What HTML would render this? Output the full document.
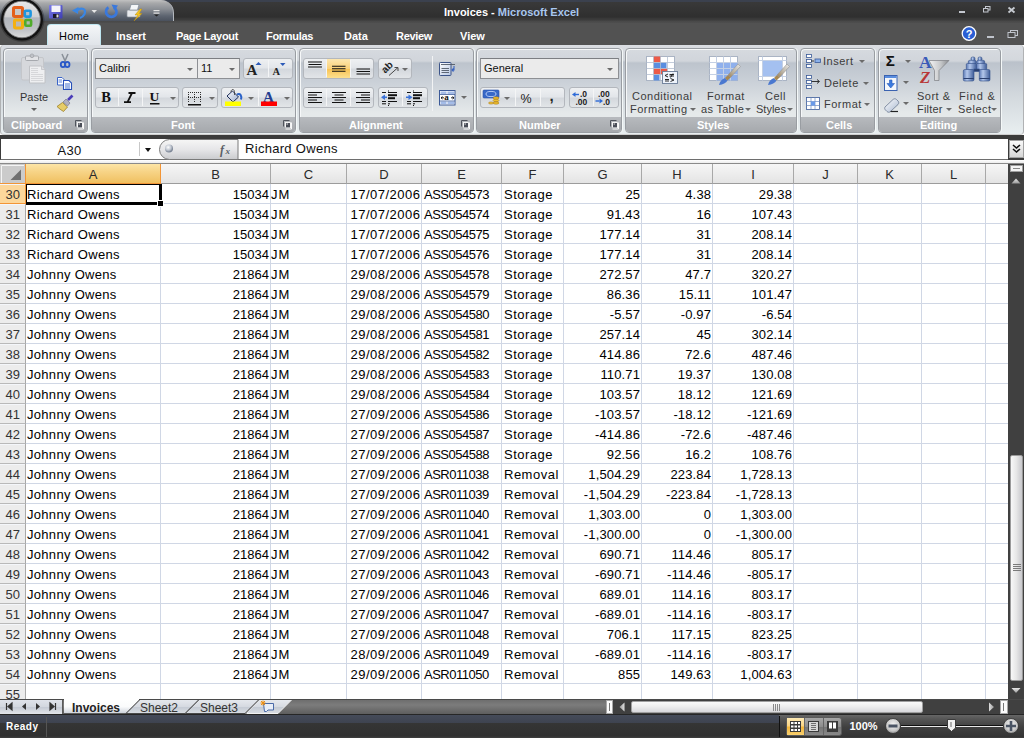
<!DOCTYPE html>
<html><head><meta charset="utf-8">
<style>
*{margin:0;padding:0;box-sizing:border-box}
html,body{width:1024px;height:738px;overflow:hidden;background:#fff;font-family:"Liberation Sans",sans-serif}
.a{position:absolute}
/* title bar */
#title{left:0;top:0;width:1024px;height:23px;background:linear-gradient(#3b414e 0,#3b414e 2px,#393939 2px,#2f2f2f 17px,#3b3b3b 19px,#3b3b3b 20px,#484848 21px,#4e4e4e 23px)}
#qat{left:0;top:0;width:174px;height:21px;border-radius:0 13px 0 0;background:linear-gradient(#c2c2c2 0,#a8a9ab 3px,#8b8f95 9px,#5d6470 16px,#4a515d 21px);border-right:1px solid #b4b8be}
#ttl{left:444px;top:6px;font-size:11px;font-weight:bold;color:#fff;white-space:nowrap}
#ttl span{color:#a9c7ef}
/* tabs */
#tabs{left:0;top:23px;width:1024px;height:22px;background:#525252}
.tab{position:absolute;top:30px;font-size:11px;color:#fff;white-space:nowrap}
#hometab{left:47px;top:24px;width:54px;height:22px;border-radius:4px 4px 0 0;background:linear-gradient(#f4f6f8,#dfe3e8);border:1px solid #bfe6f0;border-bottom:none}
/* ribbon */
#ribbon{left:0;top:45px;width:1024px;height:90px;background:linear-gradient(#dadde2 0,#d4d8dd 15px,#bac1ca 17px,#d2d8dd 50px,#e8eef0 88px);border-radius:4px 4px 4px 4px;border-left:1px solid #b0b2b4;border-right:1px solid #b0b2b4;border-bottom:1px solid #cfcfcf}
.grp{position:absolute;top:48px;height:85px;border:1px solid #999da2;border-radius:4px;box-shadow:inset 1px 1px 0 #f6f8f9,1px 0 0 #f4f8f8;background:linear-gradient(#d6dadf 0,#d1d5db 12px,#bdc4cd 14px,#ccd2d9 35px,#e5e9ea 64px);overflow:hidden}
.glab{position:absolute;left:0;right:0;bottom:0;height:15px;background:linear-gradient(#b7babe,#a6a9ad);color:#fff;font-size:11px;font-weight:bold;text-align:left;line-height:17px;white-space:nowrap}

.combo{position:absolute;height:21px;background:#ebebeb;border:1px solid #8e9094;border-top-color:#7c7e82;font-size:11px;color:#111;padding-left:3px;line-height:19px;white-space:nowrap}
.dd{position:absolute;width:0;height:0;border-left:3px solid transparent;border-right:3px solid transparent;border-top:3px solid #6b6b6b}
.bstrip{position:absolute;height:21px;border:1px solid #b3b7bd;border-radius:3px;background:linear-gradient(#eef0f2 0,#e3e6ea 45%,#d4d8dd 55%,#e2e5e8 100%)}
.bsep{position:absolute;top:1px;bottom:1px;width:1px;background:#c9ccd1;border-right:1px solid #f4f5f6}
.rt{position:absolute;font-size:11px;color:#3b3b3b;white-space:nowrap;line-height:12px;letter-spacing:0.5px}
.dl{position:absolute;width:7px;height:7px;border:1px solid #6a6d72;border-radius:1px}
/* formula bar */
#fbar{left:0;top:135px;width:1024px;height:29px;background:#3b3b3b}
#fwhite{left:0;top:139px;width:1008px;height:21px;background:#fff;border-bottom:1px solid #6e6e6e;border-left:1px solid #3b3b3b}
#fstrip{left:0;top:160px;width:1024px;height:4px;background:linear-gradient(#ffffff,#ececec);border-bottom:1px solid #8a8a8a}
/* grid */
.ch{position:absolute;top:164px;height:20px;background:linear-gradient(#f6f6f6,#e4e4e4);border-right:1px solid #a8a8a8;border-bottom:1px solid #9c9c9c;font-size:13px;color:#2a2a2a;text-align:center;line-height:21px}
.ch.sel{background:linear-gradient(#fde5a6,#f7d487 40%,#f0c060);border-right-color:#f29536;border-bottom-color:#f29536}
.vl{position:absolute;top:184px;width:1px;height:515px;background:#d0d7e5}
.hl{position:absolute;left:26px;width:982px;height:1px;background:#d0d7e5}
.rh{position:absolute;left:0;width:26px;height:20px;background:#ececec;border-right:1px solid #a8a8a8;border-bottom:1px solid #b9b9b9;box-shadow:inset 0 1px 0 #f4f6fa;font-size:13px;color:#333;text-align:right;padding-right:5px;line-height:22px}
.rh.sel{background:#fcd79b;border-right-color:#f29536;border-bottom-color:#f29536}
.c{position:absolute;height:20px;font-size:13px;color:#000;white-space:nowrap;line-height:21px}
.c.r{text-align:right}
#corner{left:0;top:164px;width:26px;height:20px;background:#cbcbcb;border-right:1px solid #f29536;border-bottom:1px solid #f29536}
#selbox{left:25px;top:183px;width:137px;height:22px;border:2px solid #000}
#fillh{left:158px;top:201px;width:5px;height:5px;background:#000;border:1px solid #fff}
/* scrollbars */
#vscroll{left:1008px;top:164px;width:16px;height:535px;background:#404040}
#vthumb{left:1010px;top:455px;width:13px;height:226px;border-radius:2px;background:linear-gradient(90deg,#f8f8f8,#e6e6e6 50%,#c8c8cc);border:1px solid #9a9a9a}
#tabbar{left:0;top:699px;width:1024px;height:15px;background:linear-gradient(#4a4a4a 0,#4a4a4a 1px,#6e6e6e 1px,#7c7c7c 6px,#5e5e5e 15px)}
#status{left:0;top:714px;width:1024px;height:24px;background:linear-gradient(#262626 0,#262626 1px,#454b59 1px,#3e4350 9px,#353535 9px,#303030 22px,#404040 24px)}
</style></head><body>
<div id="title" class="a"></div>
<div id="qat" class="a"></div>
<svg class="a" style="left:0;top:0;z-index:5" width="48" height="44" viewBox="0 0 48 44">
 <defs>
  <radialGradient id="obg" cx="50%" cy="30%" r="70%"><stop offset="0" stop-color="#f0f0f0"/><stop offset="0.5" stop-color="#c9cbce"/><stop offset="1" stop-color="#9ea2a8"/></radialGradient>
  <linearGradient id="obg2" x1="0" y1="0" x2="0" y2="1"><stop offset="0" stop-color="#e8e8e8"/><stop offset="0.42" stop-color="#d0d0d2"/><stop offset="0.46" stop-color="#b2b6bc"/><stop offset="0.75" stop-color="#bdc0c5"/><stop offset="1" stop-color="#dcdcdc"/></linearGradient>
 </defs>
 <circle cx="22" cy="19.5" r="22.5" fill="rgba(0,0,0,0.25)"/>
 <circle cx="22" cy="19.5" r="21" fill="#121212"/>
 <circle cx="22" cy="19.5" r="18.3" fill="url(#obg2)" stroke="#7a7a7a" stroke-width="0.8"/>
 <rect x="13.5" y="7.5" width="9" height="9" rx="1.2" fill="#c8c8c8" stroke="#e4601a" stroke-width="3"/>
 <rect x="24.8" y="10.8" width="5.8" height="5.8" rx="1" fill="#b8c0c8" stroke="#1e96e0" stroke-width="2.6"/>
 <rect x="14.5" y="20" width="8" height="8" rx="1.2" fill="#b8b8b8" stroke="#f4b010" stroke-width="3"/>
 <rect x="25.3" y="20" width="5.8" height="5.8" rx="1" fill="#b0b8b0" stroke="#50ac2c" stroke-width="2.6"/>
</svg>
<svg class="a" style="left:44px;top:0" width="125" height="22" viewBox="0 0 125 22">
 <defs><linearGradient id="sv" x1="0" y1="0" x2="1" y2="1"><stop offset="0" stop-color="#7b7de8"/><stop offset="1" stop-color="#3c3cb4"/></linearGradient></defs>
 <rect x="5" y="5" width="13.5" height="13.5" rx="1" fill="url(#sv)"/>
 <rect x="7.5" y="5.5" width="9" height="6.5" fill="#f4f4f8"/>
 <rect x="9" y="14" width="6" height="4" fill="#1a1a2a"/><rect x="12.5" y="14.5" width="2" height="3" fill="#ddd"/>
 <path d="M28 10.5 L34.5 7 L34 14 Z" fill="#3a86e4"/>
 <path d="M32.5 10.5 C38 7 42.5 9 40.5 14 C39.5 16 37.5 17.5 36 18" fill="none" stroke="#3a86e4" stroke-width="2.2"/>
 <path d="M47.5 10 L53 10 L50.2 13 Z" fill="#e8e8e8"/>
 <path d="M64.5 7.5 C61.5 9 61 14 64.5 16 C68 18 72.5 16 72.5 12 C72.5 10 71.5 8.5 70 7.5" fill="none" stroke="#3a78dc" stroke-width="2.6"/>
 <path d="M67.5 4.5 L74 5.5 L70.5 10.5 Z" fill="#3a78dc"/>
 <rect x="83" y="10" width="13" height="7" rx="1" fill="#e8eaee" stroke="#8a9098" stroke-width="0.7"/>
 <path d="M85.5 10 L87 4.5 L95 4.5 L93.5 10 Z" fill="#f4f6f8" stroke="#7e8894" stroke-width="0.7"/>
 <path d="M96 9 L91 15 L94 15 L90 21 L98 13.5 L95 13.5 L98 9 Z" fill="#f5c521" stroke="#b88a10" stroke-width="0.5"/>
 <rect x="109.5" y="10" width="6" height="1.2" fill="#e4e4e4"/><rect x="109.5" y="12.5" width="6" height="1.2" fill="#e4e4e4"/>
 <path d="M110 14.5 L115 14.5 L112.5 16.5 Z" fill="#222"/>
</svg>
<svg class="a" style="left:950px;top:0;z-index:5" width="74" height="44" viewBox="0 0 74 44">
 <rect x="9" y="11" width="6" height="2" fill="#c4c8d0"/>
 <rect x="35.5" y="6.5" width="4.5" height="3.5" fill="none" stroke="#c4c8d0" stroke-width="1"/>
 <rect x="33.5" y="8.5" width="4.5" height="3.5" fill="#373737" stroke="#c4c8d0" stroke-width="1"/>
 <path d="M58.5 7.5 L64.5 12.5 M64.5 7.5 L58.5 12.5" stroke="#c8ccd2" stroke-width="1.8"/>
 <circle cx="19" cy="33.5" r="6.8" fill="#2a5fd4" stroke="#ffffff" stroke-width="1.3"/>
 <text x="19" y="37.5" font-family="Liberation Sans" font-weight="bold" font-size="11" fill="#fff" text-anchor="middle">?</text>
 <rect x="37" y="36" width="7" height="2" fill="#c0c4cc"/>
 <rect x="60.5" y="30.5" width="7" height="5" fill="none" stroke="#c0c4cc" stroke-width="1"/>
 <rect x="58" y="32.5" width="7" height="5" fill="#4b4b4b" stroke="#c0c4cc" stroke-width="1"/>
</svg>
<div id="ttl" class="a">Invoices - <span>Microsoft Excel</span></div>
<div id="tabs" class="a"></div>
<div id="hometab" class="a"></div>
<div class="tab" style="left:59px;color:#000;letter-spacing:0.2px">Home</div>
<div class="tab" style="left:116px;font-weight:bold">Insert</div>
<div class="tab" style="left:176px;font-weight:bold;letter-spacing:-0.3px">Page Layout</div>
<div class="tab" style="left:266px;font-weight:bold;letter-spacing:-0.3px">Formulas</div>
<div class="tab" style="left:344px;font-weight:bold">Data</div>
<div class="tab" style="left:396px;font-weight:bold;letter-spacing:-0.3px">Review</div>
<div class="tab" style="left:460px;font-weight:bold">View</div>

<div id="ribbon" class="a"></div>
<div class="grp" style="left:3px;width:85px"><div class="glab" style="padding-left:7px">Clipboard</div></div>
<div class="grp" style="left:91px;width:205px"><div class="glab" style="padding-left:79px">Font</div></div>
<div class="grp" style="left:299px;width:175px"><div class="glab" style="padding-left:49px">Alignment</div></div>
<div class="grp" style="left:476px;width:146px"><div class="glab" style="padding-left:42px">Number</div></div>
<div class="grp" style="left:625px;width:172px"><div class="glab" style="padding-left:71px">Styles</div></div>
<div class="grp" style="left:800px;width:75px"><div class="glab" style="padding-left:25px">Cells</div></div>
<div class="grp" style="left:878px;width:123px"><div class="glab" style="padding-left:41px">Editing</div></div>


<!-- Clipboard -->
<svg class="a" style="left:18px;top:53px" width="30" height="32" viewBox="0 0 30 32">
 <rect x="3.5" y="4.5" width="22" height="22.5" rx="1.5" fill="#d6d8dc" stroke="#c4c6ca" stroke-width="1"/>
 <rect x="7.5" y="3" width="13" height="4.5" rx="1" fill="#e2e3e6" stroke="#a6a9ae" stroke-width="1"/>
 <circle cx="14" cy="2.8" r="1.8" fill="none" stroke="#a6a9ae" stroke-width="1"/>
 <path d="M11.5 13 H23.5 L27 16.5 V30 H11.5 Z" fill="#eeeff1" stroke="#c0c2c6" stroke-width="1"/>
 <path d="M23.5 13 V16.5 H27" fill="#dcdde0" stroke="#c0c2c6" stroke-width="0.8"/>
 <path d="M13 15.5 H20 M13 17.5 H20 M13 19.5 H20 M13 21.5 H25 M13 23.5 H25 M13 25.5 H25 M13 27.5 H25" stroke="#cfd1d4" stroke-width="0.8"/>
</svg>
<div class="rt" style="left:20px;top:91px;color:#333;letter-spacing:0">Paste</div>
<div class="dd" style="left:31px;top:108px;border-top-color:#606060"></div>
<svg class="a" style="left:55px;top:52px" width="20" height="62" viewBox="0 0 20 62">
 <path d="M7 2 L10.5 10 M13 2 L9.5 10" stroke="#8a9098" stroke-width="1.5"/>
 <ellipse cx="8" cy="12.5" rx="2.2" ry="2.6" fill="none" stroke="#2a58c8" stroke-width="1.8"/>
 <ellipse cx="12.3" cy="12.5" rx="2.2" ry="2.6" fill="none" stroke="#2a58c8" stroke-width="1.8"/>
 <path d="M2.5 25.5 H7 L9 27.5 V33 H2.5 Z" fill="#ffffff" stroke="#3a64c8" stroke-width="1"/>
 <path d="M3.5 28 H7 M3.5 30 H7" stroke="#4a74d0" stroke-width="0.9"/>
 <path d="M8.5 28.5 H14 L16.5 31 V37.5 H8.5 Z" fill="#ffffff" stroke="#2850b8" stroke-width="1.1"/>
 <path d="M10 32 H15 M10 34 H15 M10 36 H15" stroke="#3060c8" stroke-width="0.9"/>
 <path d="M2 54.5 L7.5 50.5 L12.5 55 L8.5 59.5 C6 58 4 56.5 2 54.5 Z" fill="#e6cc68" stroke="#9c8028" stroke-width="0.8"/>
 <path d="M8 50 L11 47 L15 51 L12.5 54 Z" fill="#b0b0c0" stroke="#6a6c80" stroke-width="0.6"/>
 <path d="M13 48 L17.5 43.5" stroke="#4a3cb8" stroke-width="2.6"/>
</svg>
<svg class="a" style="left:75px;top:120px" width="10" height="10" viewBox="0 0 10 10"><path d="M0.5 6.5 V0.5 H6.5" stroke="#50545c" stroke-width="1" fill="none"/><path d="M2 2.5 H7.5 V8 M2.5 2 V7.5" stroke="#f4f4f4" stroke-width="1" fill="none"/><rect x="3" y="3" width="4" height="4" fill="#4a4e58"/><rect x="3.5" y="3.5" width="1.5" height="1" fill="#ddd"/><path d="M2.5 9 H8.5 V2.5" stroke="#f8f8f8" stroke-width="1" fill="none"/></svg>
<!-- Font -->
<div class="combo" style="left:95px;top:58px;width:103px">Calibri</div>
<div class="dd" style="left:187px;top:68px"></div>
<div class="combo" style="left:197px;top:58px;width:43px">11</div>
<div class="dd" style="left:229px;top:68px"></div>
<div class="bstrip" style="left:243px;top:58px;width:50px"><div class="bsep" style="left:24px"></div></div>
<svg class="a" style="left:243px;top:58px" width="50" height="22" viewBox="0 0 50 22">
 <text x="3.5" y="17" font-family="Liberation Serif" font-weight="bold" font-size="15" fill="#222">A</text>
 <path d="M12.5 7 L15.5 4 L18.5 7 Z" fill="#2d5bb8"/>
 <text x="29.5" y="17" font-family="Liberation Serif" font-weight="bold" font-size="10.5" fill="#222">A</text>
 <path d="M37 5 L42.5 5 L39.75 8 Z" fill="#2d5bb8"/>
</svg>
<div class="bstrip" style="left:95px;top:87px;width:84px"><div class="bsep" style="left:22px"></div><div class="bsep" style="left:46px"></div></div>
<svg class="a" style="left:95px;top:87px" width="84" height="22" viewBox="0 0 84 22">
 <text x="6.3" y="15" font-family="Liberation Serif" font-weight="bold" font-size="14.5" fill="#111">B</text>
 <path d="M33.5 6 H40.5 M29 15.2 H36 M37 6 L32.5 15.2" stroke="#111" stroke-width="1.8" fill="none"/>
 <text x="54.5" y="14.2" font-family="Liberation Serif" font-weight="bold" font-size="13.5" fill="#111">U</text>
 <rect x="55" y="16" width="9.5" height="1.5" fill="#111"/>
 <path d="M75 10 L81 10 L78 13 Z" fill="#6b6b6b"/>
</svg>
<div class="bstrip" style="left:182px;top:87px;width:36px"></div>
<svg class="a" style="left:182px;top:87px" width="36" height="22" viewBox="0 0 36 22">
 <g fill="#303030">
  <rect x="6" y="5" width="1" height="1"/><rect x="8" y="5" width="1" height="1"/><rect x="10" y="5" width="1" height="1"/><rect x="12" y="5" width="1" height="1"/><rect x="14" y="5" width="1" height="1"/><rect x="16" y="5" width="1" height="1"/><rect x="18" y="5" width="1" height="1"/>
  <rect x="6" y="10" width="1" height="1"/><rect x="8" y="10" width="1" height="1"/><rect x="10" y="10" width="1" height="1"/><rect x="12" y="10" width="1" height="1"/><rect x="14" y="10" width="1" height="1"/><rect x="16" y="10" width="1" height="1"/><rect x="18" y="10" width="1" height="1"/>
  <rect x="6" y="7" width="1" height="1"/><rect x="6" y="9" width="1" height="1"/><rect x="6" y="12" width="1" height="1"/><rect x="6" y="14" width="1" height="1"/>
  <rect x="12" y="7" width="1" height="1"/><rect x="12" y="9" width="1" height="1"/><rect x="12" y="12" width="1" height="1"/><rect x="12" y="14" width="1" height="1"/>
  <rect x="18" y="7" width="1" height="1"/><rect x="18" y="9" width="1" height="1"/><rect x="18" y="12" width="1" height="1"/><rect x="18" y="14" width="1" height="1"/>
 </g>
 <rect x="6" y="17" width="13" height="1.5" fill="#111"/>
 <path d="M27 10 L33 10 L30 13 Z" fill="#6b6b6b"/>
</svg>
<div class="bstrip" style="left:221px;top:87px;width:72px"><div class="bsep" style="left:36px"></div></div>
<svg class="a" style="left:221px;top:87px" width="72" height="22" viewBox="0 0 72 22">
 <defs><linearGradient id="bk" x1="0" y1="0" x2="1" y2="1"><stop offset="0" stop-color="#ffffff"/><stop offset="1" stop-color="#9aaccc"/></linearGradient></defs>
 <path d="M6 9 L11.5 4 L17.5 10 L12 15 Z" fill="url(#bk)" stroke="#1c2c58" stroke-width="1"/>
 <path d="M10 5 C10 2 13 1.5 13.5 4.5 L13.5 8" fill="none" stroke="#333" stroke-width="0.8"/>
 <path d="M16 7.5 C19.5 6 21 9 20 12.5" fill="none" stroke="#2a62c8" stroke-width="2"/>
 <rect x="4" y="14.5" width="16" height="4.5" fill="#ffff00"/>
 <path d="M27 10 L33 10 L30 13 Z" fill="#6b6b6b"/>
 <text x="42" y="14.5" font-family="Liberation Serif" font-weight="bold" font-size="15" fill="#233e90">A</text>
 <rect x="40" y="14.5" width="16" height="4.5" fill="#ff0000"/>
 <path d="M63 10 L69 10 L66 13 Z" fill="#6b6b6b"/>
</svg>
<svg class="a" style="left:283px;top:120px" width="10" height="10" viewBox="0 0 10 10"><path d="M0.5 6.5 V0.5 H6.5" stroke="#50545c" stroke-width="1" fill="none"/><path d="M2 2.5 H7.5 V8 M2.5 2 V7.5" stroke="#f4f4f4" stroke-width="1" fill="none"/><rect x="3" y="3" width="4" height="4" fill="#4a4e58"/><rect x="3.5" y="3.5" width="1.5" height="1" fill="#ddd"/><path d="M2.5 9 H8.5 V2.5" stroke="#f8f8f8" stroke-width="1" fill="none"/></svg>
<!-- Alignment -->
<div class="bstrip" style="left:303px;top:58px;width:71px"><div class="bsep" style="left:22px"></div><div class="bsep" style="left:46px"></div></div>
<div class="a" style="left:327px;top:59px;width:23px;height:19px;background:linear-gradient(#fde7b0,#fbd27a 50%,#f9c252 52%,#fde08f)"></div>
<svg class="a" style="left:303px;top:58px" width="71" height="22" viewBox="0 0 71 22">
 <path d="M5 4 H19 M5.5 6.5 H18.5 M5 9 H19" stroke="#111" stroke-width="1.1"/>
 <path d="M29 8.3 H42.5 M29 10.8 H42.5 M29 13.3 H42.5" stroke="#111" stroke-width="1.1"/>
 <path d="M53.5 11 H67 M53.5 13.5 H67 M53.5 16 H67" stroke="#111" stroke-width="1.1"/>
</svg>
<div class="bstrip" style="left:378px;top:58px;width:34px"></div>
<svg class="a" style="left:378px;top:58px" width="34" height="22" viewBox="0 0 34 22">
 <text x="3" y="12.5" font-family="Liberation Sans" font-weight="bold" font-size="10" fill="#222" transform="rotate(-45 9 9)">ab</text>
 <path d="M11 17.5 L20 9.5 M16.5 9.5 H20 V13" stroke="#4a4a4a" stroke-width="1" fill="none"/>
 <path d="M24 10 L30 10 L27 13 Z" fill="#6b6b6b"/>
</svg>
<div class="bstrip" style="left:303px;top:87px;width:71px"><div class="bsep" style="left:22px"></div><div class="bsep" style="left:46px"></div></div>
<svg class="a" style="left:303px;top:87px" width="71" height="22" viewBox="0 0 71 22">
 <path d="M5 5.5 H19 M5 8 H14 M5 10.5 H19 M5 13 H14 M5 15.5 H19" stroke="#111" stroke-width="1.2"/>
 <path d="M29 5.5 H43 M31.5 8 H40.5 M29 10.5 H43 M31.5 13 H40.5 M29 15.5 H43" stroke="#111" stroke-width="1.2"/>
 <path d="M53 5.5 H67 M58 8 H67 M53 10.5 H67 M58 13 H67 M53 15.5 H67" stroke="#111" stroke-width="1.2"/>
</svg>
<div class="bstrip" style="left:378px;top:87px;width:50px"><div class="bsep" style="left:23px"></div></div>
<svg class="a" style="left:378px;top:87px" width="50" height="22" viewBox="0 0 50 22">
 <path d="M10.5 3.5 V4.5 M10.5 18 V19" stroke="#111" stroke-width="1"/><path d="M4 5.5 H8 M10 5.5 H19 M4 14.5 H8 M10 14.5 H19 M4 16.8 H8 M10 16.8 H12" stroke="#111" stroke-width="1"/><rect x="10" y="7.2" width="9" height="2" fill="#111"/><rect x="10" y="10.2" width="7" height="2" fill="#111"/><path d="M3 10.2 L7 7.5 V13 Z" fill="#3a72d8"/><rect x="6" y="9.5" width="3" height="1.5" fill="#3a72d8"/>
 <path d="M35.5 3.5 V4.5 M35.5 18 V19" stroke="#111" stroke-width="1"/><path d="M29 5.5 H33 M35 5.5 H44 M29 14.5 H33 M35 14.5 H44 M29 16.8 H33 M35 16.8 H37" stroke="#111" stroke-width="1"/><rect x="35" y="7.2" width="9" height="2" fill="#111"/><rect x="35" y="10.2" width="7" height="2" fill="#111"/><path d="M34.5 10.2 L30.5 7.5 V13 Z" fill="#3a72d8"/><rect x="28" y="9.5" width="3" height="1.5" fill="#3a72d8"/>
</svg>
<div class="a" style="left:432px;top:56px;width:1px;height:55px;background:#b0b4ba;border-right:1px solid #f2f3f4"></div>
<svg class="a" style="left:436px;top:58px" width="36" height="52" viewBox="0 0 36 52">
 <defs><linearGradient id="wp" x1="0" y1="0" x2="1" y2="1"><stop offset="0" stop-color="#ffffff"/><stop offset="1" stop-color="#b8c8e4"/></linearGradient></defs>
 <rect x="3.5" y="4.5" width="11.5" height="13" rx="0.8" fill="url(#wp)" stroke="#3c5488" stroke-width="1"/>
 <path d="M5 6.5 H19 M5.5 10.5 H13 M5.5 12.5 H13 M5.5 14.5 H13" stroke="#505a68" stroke-width="0.9"/>
 <path d="M18 8 V12 H16.5 M17.5 10.5 L16 12 L17.5 13.5" stroke="#3a64c0" stroke-width="1.1" fill="none"/>
 <rect x="3.5" y="32.5" width="15.5" height="14.5" fill="#ffffff" stroke="#3c5a98" stroke-width="1"/>
 <rect x="4.5" y="33.5" width="6" height="2.5" fill="#a4bce8"/><rect x="11.5" y="33.5" width="6.5" height="2.5" fill="#a4bce8"/>
 <rect x="4.5" y="43.5" width="6" height="2.5" fill="#a4bce8"/><rect x="11.5" y="43.5" width="6.5" height="2.5" fill="#a4bce8"/>
 <path d="M3.5 36.5 H19 M3.5 43 H19" stroke="#3c5a98" stroke-width="0.8"/>
 <text x="8.2" y="42.3" font-family="Liberation Serif" font-weight="bold" font-size="9" fill="#111">a</text>
 <path d="M5 39.8 H8 M15 39.8 H18 M6.5 38.5 L5 39.8 L6.5 41 M16.5 38.5 L18 39.8 L16.5 41" stroke="#111" stroke-width="0.9" fill="none"/>
 <path d="M25 38 L31 38 L28 41 Z" fill="#6b6b6b"/>
</svg>
<svg class="a" style="left:461px;top:120px" width="10" height="10" viewBox="0 0 10 10"><path d="M0.5 6.5 V0.5 H6.5" stroke="#50545c" stroke-width="1" fill="none"/><path d="M2 2.5 H7.5 V8 M2.5 2 V7.5" stroke="#f4f4f4" stroke-width="1" fill="none"/><rect x="3" y="3" width="4" height="4" fill="#4a4e58"/><rect x="3.5" y="3.5" width="1.5" height="1" fill="#ddd"/><path d="M2.5 9 H8.5 V2.5" stroke="#f8f8f8" stroke-width="1" fill="none"/></svg>
<!-- Number -->
<div class="combo" style="left:480px;top:58px;width:139px">General</div>
<div class="dd" style="left:607px;top:68px"></div>
<div class="bstrip" style="left:480px;top:87px;width:85px"><div class="bsep" style="left:34px"></div><div class="bsep" style="left:59px"></div></div>
<svg class="a" style="left:480px;top:87px" width="85" height="22" viewBox="0 0 85 22">
 <rect x="3" y="3" width="16" height="8" rx="1" fill="#3868c8" stroke="#2850a8" stroke-width="0.6"/>
 <ellipse cx="11" cy="7" rx="5" ry="2.6" fill="none" stroke="#cfe0ff" stroke-width="0.8"/>
 <ellipse cx="16" cy="11" rx="3" ry="1.2" fill="#f0c030" stroke="#a07010" stroke-width="0.5"/>
 <ellipse cx="16" cy="13.5" rx="3" ry="1.2" fill="#f0c030" stroke="#a07010" stroke-width="0.5"/>
 <ellipse cx="16" cy="16" rx="3" ry="1.2" fill="#f0c030" stroke="#a07010" stroke-width="0.5"/>
 <ellipse cx="11" cy="16" rx="2.5" ry="1.1" fill="#f0c030" stroke="#a07010" stroke-width="0.5"/>
 <path d="M24 10 L30 10 L27 13 Z" fill="#6b6b6b"/>
 <text x="40.5" y="15.5" font-family="Liberation Sans" font-size="12.5" fill="#222">%</text>
 <text x="69.5" y="14" font-family="Liberation Sans" font-weight="bold" font-size="15" fill="#222">,</text>
</svg>
<div class="bstrip" style="left:569px;top:87px;width:50px"><div class="bsep" style="left:23px"></div></div>
<svg class="a" style="left:569px;top:87px" width="50" height="22" viewBox="0 0 50 22">
 <path d="M3 7.5 L6.5 5 V10 Z" fill="#2e6bd8"/><rect x="6" y="6.8" width="4" height="1.4" fill="#2e6bd8"/>
 <text x="11" y="10.2" font-family="Liberation Sans" font-weight="bold" font-size="8.5" fill="#222">.0</text>
 <text x="6.5" y="17.6" font-family="Liberation Sans" font-weight="bold" font-size="8.5" fill="#222">.00</text>
 <text x="29" y="10.2" font-family="Liberation Sans" font-weight="bold" font-size="8.5" fill="#222">.00</text>
 <path d="M34 14 L30.5 11.5 V16.5 Z" fill="#2e6bd8"/><rect x="26.5" y="13.3" width="4" height="1.4" fill="#2e6bd8"/>
 <text x="34" y="17.6" font-family="Liberation Sans" font-weight="bold" font-size="8.5" fill="#222">.0</text>
</svg>
<svg class="a" style="left:610px;top:120px" width="10" height="10" viewBox="0 0 10 10"><path d="M0.5 6.5 V0.5 H6.5" stroke="#50545c" stroke-width="1" fill="none"/><path d="M2 2.5 H7.5 V8 M2.5 2 V7.5" stroke="#f4f4f4" stroke-width="1" fill="none"/><rect x="3" y="3" width="4" height="4" fill="#4a4e58"/><rect x="3.5" y="3.5" width="1.5" height="1" fill="#ddd"/><path d="M2.5 9 H8.5 V2.5" stroke="#f8f8f8" stroke-width="1" fill="none"/></svg>
<!-- Styles -->
<svg class="a" style="left:644px;top:54px" width="150" height="34" viewBox="0 0 150 34">
 <defs>
  <linearGradient id="brh" x1="0" y1="1" x2="1" y2="0"><stop offset="0" stop-color="#a08050"/><stop offset="0.4" stop-color="#b8b0a0"/><stop offset="1" stop-color="#e8e8e8"/></linearGradient>
 </defs>
 <rect x="2.5" y="2.5" width="28" height="24" fill="#ffffff" stroke="#aab4c4" stroke-width="1"/>
 <rect x="9.5" y="2.5" width="7" height="6" fill="#ec5a48"/>
 <rect x="9.5" y="8.5" width="13" height="6" fill="#5a8ee0"/>
 <rect x="9.5" y="14.5" width="14" height="6" fill="#ec5a48"/>
 <rect x="9.5" y="20.5" width="6" height="6" fill="#5a8ee0"/>
 <path d="M2.5 8.5 H30.5 M2.5 14.5 H30.5 M2.5 20.5 H30.5 M9.5 2.5 V26.5 M16.5 2.5 V26.5 M23.5 2.5 V26.5" stroke="#b4bfd0" stroke-width="0.8"/>
 <rect x="18.5" y="17.5" width="15" height="12" fill="#eef3fb" stroke="#6a7c98" stroke-width="0.9"/>
 <path d="M24 20 L21 21.5 L24 23 M25.5 20.5 H30 M25.5 22 H30 M29 19.5 L26.5 23.5" stroke="#111" stroke-width="0.9" fill="none"/>
 <path d="M21 25.5 H25 M21 27 H25 M26.5 24.5 L30 26 L26.5 27.5" stroke="#111" stroke-width="0.9" fill="none"/>
 <rect x="65.5" y="2.5" width="28" height="24" fill="#ffffff" stroke="#aab4c4" stroke-width="1"/>
 <rect x="72.5" y="8.5" width="21" height="18" fill="#8fb0ec"/>
 <path d="M65.5 8.5 H93.5 M65.5 14.5 H93.5 M65.5 20.5 H93.5 M72.5 2.5 V26.5 M79.5 2.5 V26.5 M86.5 2.5 V26.5" stroke="#c4d0e4" stroke-width="1"/>
 <path d="M75 31 C76 27 78 25 81 24 L83.5 26.5 C82 29 79 30.5 75 31 Z" fill="#4a78d0"/>
 <path d="M81 24 L84 21 L86.5 23.5 L83.5 26.5 Z" fill="#a88850"/>
 <path d="M84 21 L94 10 L96.5 12.5 L86.5 23.5 Z" fill="url(#brh)" stroke="#8a8a8a" stroke-width="0.5"/>
 <rect x="114.5" y="2.5" width="28" height="24" fill="#ffffff" stroke="#aab4c4" stroke-width="1"/>
 <rect x="118.5" y="6.5" width="20" height="16" fill="#a4c0f0" stroke="#c8d4e8" stroke-width="1"/>
 <path d="M114.5 6.5 H142.5 M114.5 22.5 H142.5 M118.5 2.5 V26.5 M138.5 2.5 V26.5" stroke="#c4d0e4" stroke-width="1"/>
 <path d="M124 31 C125 27 127 25 130 24 L132.5 26.5 C131 29 128 30.5 124 31 Z" fill="#4a78d0"/>
 <path d="M130 24 L133 21 L135.5 23.5 L132.5 26.5 Z" fill="#a88850"/>
 <path d="M133 21 L143 10 L145.5 12.5 L135.5 23.5 Z" fill="url(#brh)" stroke="#8a8a8a" stroke-width="0.5"/>
</svg>
<div class="rt" style="left:632px;top:90px">Conditional</div>
<div class="rt" style="left:630px;top:103px">Formatting</div>
<div class="dd" style="left:690px;top:108px"></div>
<div class="rt" style="left:707px;top:90px">Format</div>
<div class="rt" style="left:701px;top:103px;letter-spacing:0.3px">as Table</div>
<div class="dd" style="left:745px;top:108px"></div>
<div class="rt" style="left:765px;top:90px">Cell</div>
<div class="rt" style="left:756px;top:103px;letter-spacing:0">Styles</div>
<div class="dd" style="left:787px;top:108px"></div>
<!-- Cells -->
<svg class="a" style="left:804px;top:52px" width="18" height="60" viewBox="0 0 18 60">
 <rect x="2.5" y="2.5" width="5" height="3" fill="#fff" stroke="#3a5a98" stroke-width="0.8"/>
 <rect x="2.5" y="7.5" width="5" height="3" fill="#fff" stroke="#3a5a98" stroke-width="0.8"/>
 <rect x="2.5" y="12.5" width="5" height="3" fill="#fff" stroke="#3a5a98" stroke-width="0.8"/>
 <rect x="11" y="7" width="5.5" height="3.5" fill="#8ab0ea" stroke="#3a5a98" stroke-width="0.8"/>
 <path d="M7 9 H10" stroke="#222" stroke-width="0.9"/>
 <rect x="2.5" y="23.5" width="5" height="3" fill="#fff" stroke="#3a5a98" stroke-width="0.8"/>
 <rect x="2.5" y="28.5" width="5" height="3" fill="#fff" stroke="#3a5a98" stroke-width="0.8"/>
 <rect x="2.5" y="33.5" width="5" height="3" fill="#fff" stroke="#3a5a98" stroke-width="0.8"/>
 <path d="M7.5 29.5 H15 M13 27.5 L15.5 29.5 L13 31.5" stroke="#222" stroke-width="0.9" fill="none"/>
 <rect x="2.5" y="45.5" width="13" height="12" fill="#fff" stroke="#3a5a98" stroke-width="0.8"/>
 <path d="M2.5 49.5 H15.5 M2.5 53.5 H15.5 M7 45.5 V57.5 M11 45.5 V57.5" stroke="#6a8ac0" stroke-width="0.7"/>
 <rect x="7" y="49.5" width="4" height="4" fill="#6a9ae8"/>
</svg>
<div class="rt" style="left:823px;top:55px">Insert</div>
<div class="dd" style="left:859px;top:60px"></div>
<div class="rt" style="left:824px;top:77px">Delete</div>
<div class="dd" style="left:863px;top:82px"></div>
<div class="rt" style="left:824px;top:98px">Format</div>
<div class="dd" style="left:864px;top:103px"></div>
<!-- Editing -->
<svg class="a" style="left:882px;top:52px" width="120" height="62" viewBox="0 0 120 62">
 <text x="3.5" y="13.8" font-family="Liberation Sans" font-weight="bold" font-size="14" fill="#111" transform="scale(1.08 1)">&#931;</text>
 <path d="M23 8 L29 8 L26 11 Z" fill="#6b6b6b"/>
 <rect x="2.5" y="23.5" width="12.5" height="15" fill="#f4f7fc" stroke="#3a62b0" stroke-width="1"/>
 <rect x="3" y="24" width="11.5" height="2" fill="#5a8ee0"/>
 <path d="M7.5 28 H10 V31.5 H12.5 L8.75 36 L5 31.5 H7.5 Z" fill="#3a7ae0" stroke="#2a5ab8" stroke-width="0.6"/>
 <path d="M21 29 L27 29 L24 32 Z" fill="#6b6b6b"/>
 <defs><linearGradient id="er" x1="0" y1="0" x2="1" y2="1"><stop offset="0" stop-color="#ffffff"/><stop offset="1" stop-color="#a8b8d0"/></linearGradient></defs>
 <path d="M3 55 L11 47.5 C12 46.5 13.5 46.5 14.5 47.5 L16 49 C17 50 17 51.5 16 52.5 L8.5 59.5 C7.5 60.5 6 60.5 5 59.5 L3.5 58 C2.5 57 2.5 56 3 55 Z" fill="url(#er)" stroke="#6a7890" stroke-width="0.8"/>
 <path d="M8.5 59.5 H16" stroke="#222" stroke-width="1.2"/>
 <path d="M21 50 L27 50 L24 53 Z" fill="#6b6b6b"/>
 <defs>
  <linearGradient id="fun" x1="0" y1="0" x2="1" y2="0"><stop offset="0" stop-color="#f4f4f4"/><stop offset="0.6" stop-color="#c4c6c8"/><stop offset="1" stop-color="#8a8c90"/></linearGradient>
  <linearGradient id="bino" x1="0" y1="0" x2="1" y2="0"><stop offset="0" stop-color="#5a78b4"/><stop offset="0.35" stop-color="#b4c8ec"/><stop offset="1" stop-color="#3e5c98"/></linearGradient>
 </defs>
 <text x="37" y="15.5" font-family="Liberation Serif" font-weight="bold" font-size="17.5" fill="#3a5ab8">A</text>
 <text x="38" y="30.5" font-family="Liberation Serif" font-weight="bold" font-style="italic" font-size="17" fill="#b83838">Z</text>
 <path d="M47 8.5 L67 8.5 L57 18.5 V28.5 H52.5 V18.5 Z" fill="url(#fun)" stroke="#7c7e82" stroke-width="0.7"/>
 <g fill="url(#bino)" stroke="#34508a" stroke-width="0.6">
  <rect x="89" y="5" width="4" height="4" rx="1.5"/>
  <rect x="96" y="5" width="4" height="4" rx="1.5"/>
  <rect x="86.3" y="8.3" width="8" height="4" rx="1.5"/>
  <rect x="94.7" y="8.3" width="8" height="4" rx="1.5"/>
  <rect x="84.3" y="11.5" width="10.2" height="6.5" rx="1"/>
  <rect x="94.5" y="11.5" width="10.2" height="6.5" rx="1"/>
  <rect x="92" y="17" width="5.3" height="2.5" fill="#2a4070"/>
  <rect x="81.3" y="17.5" width="10.7" height="11.5" rx="1.5"/>
  <rect x="97.3" y="17.5" width="10.7" height="11.5" rx="1.5"/>
 </g>
 <path d="M81.5 26.5 H91.8 M97.5 26.5 H107.8" stroke="#2a4070" stroke-width="1"/>
</svg>
<div class="rt" style="left:917px;top:90px">Sort &amp;</div>
<div class="rt" style="left:917px;top:103px;letter-spacing:0.2px">Filter</div>
<div class="dd" style="left:946px;top:108px"></div>
<div class="rt" style="left:959px;top:90px;letter-spacing:0.8px">Find &amp;</div>
<div class="rt" style="left:958px;top:103px">Select</div>
<div class="dd" style="left:991px;top:108px"></div>
<div id="fbar" class="a"></div>
<div id="fwhite" class="a"></div>
<div id="fstrip" class="a"></div>
<div class="a" style="left:0;top:141px;width:139px;height:19px;font-size:13px;color:#111;text-align:center;line-height:19px;letter-spacing:0.3px">A30</div>
<div class="a" style="left:139px;top:142px;width:1px;height:14px;background:#c8c8c8"></div>
<div class="a" style="left:145px;top:148px;width:0;height:0;border-left:3.5px solid transparent;border-right:3.5px solid transparent;border-top:4px solid #111"></div>
<svg class="a" style="left:158px;top:139px" width="82" height="21" viewBox="0 0 82 21">
 <defs>
  <linearGradient id="pl" x1="0" y1="0" x2="0" y2="1"><stop offset="0" stop-color="#f6f6f6"/><stop offset="0.5" stop-color="#e6e6e8"/><stop offset="1" stop-color="#cacbce"/></linearGradient>
  <radialGradient id="pc" cx="40%" cy="35%" r="60%"><stop offset="0" stop-color="#ffffff"/><stop offset="0.6" stop-color="#c0c6d0"/><stop offset="1" stop-color="#7a8494"/></radialGradient>
 </defs>
 <path d="M11.5 0.5 H80 V20.5 H11.5 A10 10 0 0 1 11.5 0.5 Z" fill="url(#pl)" stroke="#7a7a7a" stroke-width="1"/>
 <circle cx="11" cy="9.5" r="4" fill="url(#pc)"/>
 <text x="62" y="14.5" font-family="Liberation Serif" font-style="italic" font-weight="bold" font-size="12" fill="#5a5e66">f</text>
 <text x="67.5" y="14.5" font-family="Liberation Serif" font-style="italic" font-weight="bold" font-size="9" fill="#5a5e66">x</text>
</svg>
<div class="a" style="left:245px;top:139px;font-size:13px;color:#111;line-height:19px;white-space:nowrap;letter-spacing:0.3px">Richard Owens</div>
<div class="a" style="left:1009px;top:140px;width:15px;height:18px;background:linear-gradient(#fafafa,#d6d6d6);border:1px solid #a0a0a0"></div>
<svg class="a" style="left:1009px;top:140px" width="15" height="18" viewBox="0 0 15 18">
 <path d="M4 5 L7.5 8 L11 5 M4 9 L7.5 12 L11 9" stroke="#111" stroke-width="1.6" fill="none"/>
</svg>

<div id="corner" class="a"></div>
<svg class="a" style="left:0;top:164px" width="26" height="20" viewBox="0 0 26 20">
 <path d="M1.5 19 V1.5 H24" fill="none" stroke="#f4f4f4" stroke-width="1"/>
 <path d="M10.5 16 L21 16 L21 5.5 Z" fill="#707070"/>
</svg>
<div class="ch sel" style="left:26px;width:135px">A</div>
<div class="ch" style="left:161px;width:110px">B</div>
<div class="ch" style="left:271px;width:76px">C</div>
<div class="ch" style="left:347px;width:75px">D</div>
<div class="ch" style="left:422px;width:80px">E</div>
<div class="ch" style="left:502px;width:62px">F</div>
<div class="ch" style="left:564px;width:78px">G</div>
<div class="ch" style="left:642px;width:71px">H</div>
<div class="ch" style="left:713px;width:81px">I</div>
<div class="ch" style="left:794px;width:64px">J</div>
<div class="ch" style="left:858px;width:64px">K</div>
<div class="ch" style="left:922px;width:64px">L</div>
<div class="ch" style="left:986px;width:22px;border-right:none"></div>
<div class="vl" style="left:160px"></div>
<div class="vl" style="left:270px"></div>
<div class="vl" style="left:346px"></div>
<div class="vl" style="left:421px"></div>
<div class="vl" style="left:501px"></div>
<div class="vl" style="left:563px"></div>
<div class="vl" style="left:641px"></div>
<div class="vl" style="left:712px"></div>
<div class="vl" style="left:793px"></div>
<div class="vl" style="left:857px"></div>
<div class="vl" style="left:921px"></div>
<div class="vl" style="left:985px"></div>
<div class="hl" style="top:203px"></div>
<div class="hl" style="top:223px"></div>
<div class="hl" style="top:243px"></div>
<div class="hl" style="top:263px"></div>
<div class="hl" style="top:283px"></div>
<div class="hl" style="top:303px"></div>
<div class="hl" style="top:323px"></div>
<div class="hl" style="top:343px"></div>
<div class="hl" style="top:363px"></div>
<div class="hl" style="top:383px"></div>
<div class="hl" style="top:403px"></div>
<div class="hl" style="top:423px"></div>
<div class="hl" style="top:443px"></div>
<div class="hl" style="top:463px"></div>
<div class="hl" style="top:483px"></div>
<div class="hl" style="top:503px"></div>
<div class="hl" style="top:523px"></div>
<div class="hl" style="top:543px"></div>
<div class="hl" style="top:563px"></div>
<div class="hl" style="top:583px"></div>
<div class="hl" style="top:603px"></div>
<div class="hl" style="top:623px"></div>
<div class="hl" style="top:643px"></div>
<div class="hl" style="top:663px"></div>
<div class="hl" style="top:683px"></div>
<div class="rh sel" style="top:184px">30</div>
<div class="rh" style="top:204px">31</div>
<div class="rh" style="top:224px">32</div>
<div class="rh" style="top:244px">33</div>
<div class="rh" style="top:264px">34</div>
<div class="rh" style="top:284px">35</div>
<div class="rh" style="top:304px">36</div>
<div class="rh" style="top:324px">37</div>
<div class="rh" style="top:344px">38</div>
<div class="rh" style="top:364px">39</div>
<div class="rh" style="top:384px">40</div>
<div class="rh" style="top:404px">41</div>
<div class="rh" style="top:424px">42</div>
<div class="rh" style="top:444px">43</div>
<div class="rh" style="top:464px">44</div>
<div class="rh" style="top:484px">45</div>
<div class="rh" style="top:504px">46</div>
<div class="rh" style="top:524px">47</div>
<div class="rh" style="top:544px">48</div>
<div class="rh" style="top:564px">49</div>
<div class="rh" style="top:584px">50</div>
<div class="rh" style="top:604px">51</div>
<div class="rh" style="top:624px">52</div>
<div class="rh" style="top:644px">53</div>
<div class="rh" style="top:664px">54</div>
<div class="rh" style="top:684px">55</div>
<div class="c" style="top:184px;left:27px;letter-spacing:0.3px;">Richard Owens</div>
<div class="c r" style="top:184px;left:161px;width:108px;">15034</div>
<div class="c" style="top:184px;left:271px;letter-spacing:1.0px;">JM</div>
<div class="c r" style="top:184px;left:347px;width:73.5px;letter-spacing:0.5px;">17/07/2006</div>
<div class="c" style="top:184px;left:424px;letter-spacing:-0.5px;">ASS054573</div>
<div class="c" style="top:184px;left:504px;letter-spacing:0.5px;">Storage</div>
<div class="c r" style="top:184px;left:564px;width:76.15px;letter-spacing:0.15px;">25</div>
<div class="c r" style="top:184px;left:642px;width:69.15px;letter-spacing:0.15px;">4.38</div>
<div class="c r" style="top:184px;left:713px;width:79.15px;letter-spacing:0.15px;">29.38</div>
<div class="c" style="top:204px;left:27px;letter-spacing:0.3px;">Richard Owens</div>
<div class="c r" style="top:204px;left:161px;width:108px;">15034</div>
<div class="c" style="top:204px;left:271px;letter-spacing:1.0px;">JM</div>
<div class="c r" style="top:204px;left:347px;width:73.5px;letter-spacing:0.5px;">17/07/2006</div>
<div class="c" style="top:204px;left:424px;letter-spacing:-0.5px;">ASS054574</div>
<div class="c" style="top:204px;left:504px;letter-spacing:0.5px;">Storage</div>
<div class="c r" style="top:204px;left:564px;width:76.15px;letter-spacing:0.15px;">91.43</div>
<div class="c r" style="top:204px;left:642px;width:69.15px;letter-spacing:0.15px;">16</div>
<div class="c r" style="top:204px;left:713px;width:79.15px;letter-spacing:0.15px;">107.43</div>
<div class="c" style="top:224px;left:27px;letter-spacing:0.3px;">Richard Owens</div>
<div class="c r" style="top:224px;left:161px;width:108px;">15034</div>
<div class="c" style="top:224px;left:271px;letter-spacing:1.0px;">JM</div>
<div class="c r" style="top:224px;left:347px;width:73.5px;letter-spacing:0.5px;">17/07/2006</div>
<div class="c" style="top:224px;left:424px;letter-spacing:-0.5px;">ASS054575</div>
<div class="c" style="top:224px;left:504px;letter-spacing:0.5px;">Storage</div>
<div class="c r" style="top:224px;left:564px;width:76.15px;letter-spacing:0.15px;">177.14</div>
<div class="c r" style="top:224px;left:642px;width:69.15px;letter-spacing:0.15px;">31</div>
<div class="c r" style="top:224px;left:713px;width:79.15px;letter-spacing:0.15px;">208.14</div>
<div class="c" style="top:244px;left:27px;letter-spacing:0.3px;">Richard Owens</div>
<div class="c r" style="top:244px;left:161px;width:108px;">15034</div>
<div class="c" style="top:244px;left:271px;letter-spacing:1.0px;">JM</div>
<div class="c r" style="top:244px;left:347px;width:73.5px;letter-spacing:0.5px;">17/07/2006</div>
<div class="c" style="top:244px;left:424px;letter-spacing:-0.5px;">ASS054576</div>
<div class="c" style="top:244px;left:504px;letter-spacing:0.5px;">Storage</div>
<div class="c r" style="top:244px;left:564px;width:76.15px;letter-spacing:0.15px;">177.14</div>
<div class="c r" style="top:244px;left:642px;width:69.15px;letter-spacing:0.15px;">31</div>
<div class="c r" style="top:244px;left:713px;width:79.15px;letter-spacing:0.15px;">208.14</div>
<div class="c" style="top:264px;left:27px;letter-spacing:0.3px;">Johnny Owens</div>
<div class="c r" style="top:264px;left:161px;width:108px;">21864</div>
<div class="c" style="top:264px;left:271px;letter-spacing:1.0px;">JM</div>
<div class="c r" style="top:264px;left:347px;width:73.5px;letter-spacing:0.5px;">29/08/2006</div>
<div class="c" style="top:264px;left:424px;letter-spacing:-0.5px;">ASS054578</div>
<div class="c" style="top:264px;left:504px;letter-spacing:0.5px;">Storage</div>
<div class="c r" style="top:264px;left:564px;width:76.15px;letter-spacing:0.15px;">272.57</div>
<div class="c r" style="top:264px;left:642px;width:69.15px;letter-spacing:0.15px;">47.7</div>
<div class="c r" style="top:264px;left:713px;width:79.15px;letter-spacing:0.15px;">320.27</div>
<div class="c" style="top:284px;left:27px;letter-spacing:0.3px;">Johnny Owens</div>
<div class="c r" style="top:284px;left:161px;width:108px;">21864</div>
<div class="c" style="top:284px;left:271px;letter-spacing:1.0px;">JM</div>
<div class="c r" style="top:284px;left:347px;width:73.5px;letter-spacing:0.5px;">29/08/2006</div>
<div class="c" style="top:284px;left:424px;letter-spacing:-0.5px;">ASS054579</div>
<div class="c" style="top:284px;left:504px;letter-spacing:0.5px;">Storage</div>
<div class="c r" style="top:284px;left:564px;width:76.15px;letter-spacing:0.15px;">86.36</div>
<div class="c r" style="top:284px;left:642px;width:69.15px;letter-spacing:0.15px;">15.11</div>
<div class="c r" style="top:284px;left:713px;width:79.15px;letter-spacing:0.15px;">101.47</div>
<div class="c" style="top:304px;left:27px;letter-spacing:0.3px;">Johnny Owens</div>
<div class="c r" style="top:304px;left:161px;width:108px;">21864</div>
<div class="c" style="top:304px;left:271px;letter-spacing:1.0px;">JM</div>
<div class="c r" style="top:304px;left:347px;width:73.5px;letter-spacing:0.5px;">29/08/2006</div>
<div class="c" style="top:304px;left:424px;letter-spacing:-0.5px;">ASS054580</div>
<div class="c" style="top:304px;left:504px;letter-spacing:0.5px;">Storage</div>
<div class="c r" style="top:304px;left:564px;width:76.15px;letter-spacing:0.15px;">-5.57</div>
<div class="c r" style="top:304px;left:642px;width:69.15px;letter-spacing:0.15px;">-0.97</div>
<div class="c r" style="top:304px;left:713px;width:79.15px;letter-spacing:0.15px;">-6.54</div>
<div class="c" style="top:324px;left:27px;letter-spacing:0.3px;">Johnny Owens</div>
<div class="c r" style="top:324px;left:161px;width:108px;">21864</div>
<div class="c" style="top:324px;left:271px;letter-spacing:1.0px;">JM</div>
<div class="c r" style="top:324px;left:347px;width:73.5px;letter-spacing:0.5px;">29/08/2006</div>
<div class="c" style="top:324px;left:424px;letter-spacing:-0.5px;">ASS054581</div>
<div class="c" style="top:324px;left:504px;letter-spacing:0.5px;">Storage</div>
<div class="c r" style="top:324px;left:564px;width:76.15px;letter-spacing:0.15px;">257.14</div>
<div class="c r" style="top:324px;left:642px;width:69.15px;letter-spacing:0.15px;">45</div>
<div class="c r" style="top:324px;left:713px;width:79.15px;letter-spacing:0.15px;">302.14</div>
<div class="c" style="top:344px;left:27px;letter-spacing:0.3px;">Johnny Owens</div>
<div class="c r" style="top:344px;left:161px;width:108px;">21864</div>
<div class="c" style="top:344px;left:271px;letter-spacing:1.0px;">JM</div>
<div class="c r" style="top:344px;left:347px;width:73.5px;letter-spacing:0.5px;">29/08/2006</div>
<div class="c" style="top:344px;left:424px;letter-spacing:-0.5px;">ASS054582</div>
<div class="c" style="top:344px;left:504px;letter-spacing:0.5px;">Storage</div>
<div class="c r" style="top:344px;left:564px;width:76.15px;letter-spacing:0.15px;">414.86</div>
<div class="c r" style="top:344px;left:642px;width:69.15px;letter-spacing:0.15px;">72.6</div>
<div class="c r" style="top:344px;left:713px;width:79.15px;letter-spacing:0.15px;">487.46</div>
<div class="c" style="top:364px;left:27px;letter-spacing:0.3px;">Johnny Owens</div>
<div class="c r" style="top:364px;left:161px;width:108px;">21864</div>
<div class="c" style="top:364px;left:271px;letter-spacing:1.0px;">JM</div>
<div class="c r" style="top:364px;left:347px;width:73.5px;letter-spacing:0.5px;">29/08/2006</div>
<div class="c" style="top:364px;left:424px;letter-spacing:-0.5px;">ASS054583</div>
<div class="c" style="top:364px;left:504px;letter-spacing:0.5px;">Storage</div>
<div class="c r" style="top:364px;left:564px;width:76.15px;letter-spacing:0.15px;">110.71</div>
<div class="c r" style="top:364px;left:642px;width:69.15px;letter-spacing:0.15px;">19.37</div>
<div class="c r" style="top:364px;left:713px;width:79.15px;letter-spacing:0.15px;">130.08</div>
<div class="c" style="top:384px;left:27px;letter-spacing:0.3px;">Johnny Owens</div>
<div class="c r" style="top:384px;left:161px;width:108px;">21864</div>
<div class="c" style="top:384px;left:271px;letter-spacing:1.0px;">JM</div>
<div class="c r" style="top:384px;left:347px;width:73.5px;letter-spacing:0.5px;">29/08/2006</div>
<div class="c" style="top:384px;left:424px;letter-spacing:-0.5px;">ASS054584</div>
<div class="c" style="top:384px;left:504px;letter-spacing:0.5px;">Storage</div>
<div class="c r" style="top:384px;left:564px;width:76.15px;letter-spacing:0.15px;">103.57</div>
<div class="c r" style="top:384px;left:642px;width:69.15px;letter-spacing:0.15px;">18.12</div>
<div class="c r" style="top:384px;left:713px;width:79.15px;letter-spacing:0.15px;">121.69</div>
<div class="c" style="top:404px;left:27px;letter-spacing:0.3px;">Johnny Owens</div>
<div class="c r" style="top:404px;left:161px;width:108px;">21864</div>
<div class="c" style="top:404px;left:271px;letter-spacing:1.0px;">JM</div>
<div class="c r" style="top:404px;left:347px;width:73.5px;letter-spacing:0.5px;">27/09/2006</div>
<div class="c" style="top:404px;left:424px;letter-spacing:-0.5px;">ASS054586</div>
<div class="c" style="top:404px;left:504px;letter-spacing:0.5px;">Storage</div>
<div class="c r" style="top:404px;left:564px;width:76.15px;letter-spacing:0.15px;">-103.57</div>
<div class="c r" style="top:404px;left:642px;width:69.15px;letter-spacing:0.15px;">-18.12</div>
<div class="c r" style="top:404px;left:713px;width:79.15px;letter-spacing:0.15px;">-121.69</div>
<div class="c" style="top:424px;left:27px;letter-spacing:0.3px;">Johnny Owens</div>
<div class="c r" style="top:424px;left:161px;width:108px;">21864</div>
<div class="c" style="top:424px;left:271px;letter-spacing:1.0px;">JM</div>
<div class="c r" style="top:424px;left:347px;width:73.5px;letter-spacing:0.5px;">27/09/2006</div>
<div class="c" style="top:424px;left:424px;letter-spacing:-0.5px;">ASS054587</div>
<div class="c" style="top:424px;left:504px;letter-spacing:0.5px;">Storage</div>
<div class="c r" style="top:424px;left:564px;width:76.15px;letter-spacing:0.15px;">-414.86</div>
<div class="c r" style="top:424px;left:642px;width:69.15px;letter-spacing:0.15px;">-72.6</div>
<div class="c r" style="top:424px;left:713px;width:79.15px;letter-spacing:0.15px;">-487.46</div>
<div class="c" style="top:444px;left:27px;letter-spacing:0.3px;">Johnny Owens</div>
<div class="c r" style="top:444px;left:161px;width:108px;">21864</div>
<div class="c" style="top:444px;left:271px;letter-spacing:1.0px;">JM</div>
<div class="c r" style="top:444px;left:347px;width:73.5px;letter-spacing:0.5px;">27/09/2006</div>
<div class="c" style="top:444px;left:424px;letter-spacing:-0.5px;">ASS054588</div>
<div class="c" style="top:444px;left:504px;letter-spacing:0.5px;">Storage</div>
<div class="c r" style="top:444px;left:564px;width:76.15px;letter-spacing:0.15px;">92.56</div>
<div class="c r" style="top:444px;left:642px;width:69.15px;letter-spacing:0.15px;">16.2</div>
<div class="c r" style="top:444px;left:713px;width:79.15px;letter-spacing:0.15px;">108.76</div>
<div class="c" style="top:464px;left:27px;letter-spacing:0.3px;">Johnny Owens</div>
<div class="c r" style="top:464px;left:161px;width:108px;">21864</div>
<div class="c" style="top:464px;left:271px;letter-spacing:1.0px;">JM</div>
<div class="c r" style="top:464px;left:347px;width:73.5px;letter-spacing:0.5px;">27/09/2006</div>
<div class="c" style="top:464px;left:424px;letter-spacing:-0.5px;">ASR011038</div>
<div class="c" style="top:464px;left:504px;letter-spacing:0.5px;">Removal</div>
<div class="c r" style="top:464px;left:564px;width:76.15px;letter-spacing:0.15px;">1,504.29</div>
<div class="c r" style="top:464px;left:642px;width:69.15px;letter-spacing:0.15px;">223.84</div>
<div class="c r" style="top:464px;left:713px;width:79.15px;letter-spacing:0.15px;">1,728.13</div>
<div class="c" style="top:484px;left:27px;letter-spacing:0.3px;">Johnny Owens</div>
<div class="c r" style="top:484px;left:161px;width:108px;">21864</div>
<div class="c" style="top:484px;left:271px;letter-spacing:1.0px;">JM</div>
<div class="c r" style="top:484px;left:347px;width:73.5px;letter-spacing:0.5px;">27/09/2006</div>
<div class="c" style="top:484px;left:424px;letter-spacing:-0.5px;">ASR011039</div>
<div class="c" style="top:484px;left:504px;letter-spacing:0.5px;">Removal</div>
<div class="c r" style="top:484px;left:564px;width:76.15px;letter-spacing:0.15px;">-1,504.29</div>
<div class="c r" style="top:484px;left:642px;width:69.15px;letter-spacing:0.15px;">-223.84</div>
<div class="c r" style="top:484px;left:713px;width:79.15px;letter-spacing:0.15px;">-1,728.13</div>
<div class="c" style="top:504px;left:27px;letter-spacing:0.3px;">Johnny Owens</div>
<div class="c r" style="top:504px;left:161px;width:108px;">21864</div>
<div class="c" style="top:504px;left:271px;letter-spacing:1.0px;">JM</div>
<div class="c r" style="top:504px;left:347px;width:73.5px;letter-spacing:0.5px;">27/09/2006</div>
<div class="c" style="top:504px;left:424px;letter-spacing:-0.5px;">ASR011040</div>
<div class="c" style="top:504px;left:504px;letter-spacing:0.5px;">Removal</div>
<div class="c r" style="top:504px;left:564px;width:76.15px;letter-spacing:0.15px;">1,303.00</div>
<div class="c r" style="top:504px;left:642px;width:69.15px;letter-spacing:0.15px;">0</div>
<div class="c r" style="top:504px;left:713px;width:79.15px;letter-spacing:0.15px;">1,303.00</div>
<div class="c" style="top:524px;left:27px;letter-spacing:0.3px;">Johnny Owens</div>
<div class="c r" style="top:524px;left:161px;width:108px;">21864</div>
<div class="c" style="top:524px;left:271px;letter-spacing:1.0px;">JM</div>
<div class="c r" style="top:524px;left:347px;width:73.5px;letter-spacing:0.5px;">27/09/2006</div>
<div class="c" style="top:524px;left:424px;letter-spacing:-0.5px;">ASR011041</div>
<div class="c" style="top:524px;left:504px;letter-spacing:0.5px;">Removal</div>
<div class="c r" style="top:524px;left:564px;width:76.15px;letter-spacing:0.15px;">-1,300.00</div>
<div class="c r" style="top:524px;left:642px;width:69.15px;letter-spacing:0.15px;">0</div>
<div class="c r" style="top:524px;left:713px;width:79.15px;letter-spacing:0.15px;">-1,300.00</div>
<div class="c" style="top:544px;left:27px;letter-spacing:0.3px;">Johnny Owens</div>
<div class="c r" style="top:544px;left:161px;width:108px;">21864</div>
<div class="c" style="top:544px;left:271px;letter-spacing:1.0px;">JM</div>
<div class="c r" style="top:544px;left:347px;width:73.5px;letter-spacing:0.5px;">27/09/2006</div>
<div class="c" style="top:544px;left:424px;letter-spacing:-0.5px;">ASR011042</div>
<div class="c" style="top:544px;left:504px;letter-spacing:0.5px;">Removal</div>
<div class="c r" style="top:544px;left:564px;width:76.15px;letter-spacing:0.15px;">690.71</div>
<div class="c r" style="top:544px;left:642px;width:69.15px;letter-spacing:0.15px;">114.46</div>
<div class="c r" style="top:544px;left:713px;width:79.15px;letter-spacing:0.15px;">805.17</div>
<div class="c" style="top:564px;left:27px;letter-spacing:0.3px;">Johnny Owens</div>
<div class="c r" style="top:564px;left:161px;width:108px;">21864</div>
<div class="c" style="top:564px;left:271px;letter-spacing:1.0px;">JM</div>
<div class="c r" style="top:564px;left:347px;width:73.5px;letter-spacing:0.5px;">27/09/2006</div>
<div class="c" style="top:564px;left:424px;letter-spacing:-0.5px;">ASR011043</div>
<div class="c" style="top:564px;left:504px;letter-spacing:0.5px;">Removal</div>
<div class="c r" style="top:564px;left:564px;width:76.15px;letter-spacing:0.15px;">-690.71</div>
<div class="c r" style="top:564px;left:642px;width:69.15px;letter-spacing:0.15px;">-114.46</div>
<div class="c r" style="top:564px;left:713px;width:79.15px;letter-spacing:0.15px;">-805.17</div>
<div class="c" style="top:584px;left:27px;letter-spacing:0.3px;">Johnny Owens</div>
<div class="c r" style="top:584px;left:161px;width:108px;">21864</div>
<div class="c" style="top:584px;left:271px;letter-spacing:1.0px;">JM</div>
<div class="c r" style="top:584px;left:347px;width:73.5px;letter-spacing:0.5px;">27/09/2006</div>
<div class="c" style="top:584px;left:424px;letter-spacing:-0.5px;">ASR011046</div>
<div class="c" style="top:584px;left:504px;letter-spacing:0.5px;">Removal</div>
<div class="c r" style="top:584px;left:564px;width:76.15px;letter-spacing:0.15px;">689.01</div>
<div class="c r" style="top:584px;left:642px;width:69.15px;letter-spacing:0.15px;">114.16</div>
<div class="c r" style="top:584px;left:713px;width:79.15px;letter-spacing:0.15px;">803.17</div>
<div class="c" style="top:604px;left:27px;letter-spacing:0.3px;">Johnny Owens</div>
<div class="c r" style="top:604px;left:161px;width:108px;">21864</div>
<div class="c" style="top:604px;left:271px;letter-spacing:1.0px;">JM</div>
<div class="c r" style="top:604px;left:347px;width:73.5px;letter-spacing:0.5px;">27/09/2006</div>
<div class="c" style="top:604px;left:424px;letter-spacing:-0.5px;">ASR011047</div>
<div class="c" style="top:604px;left:504px;letter-spacing:0.5px;">Removal</div>
<div class="c r" style="top:604px;left:564px;width:76.15px;letter-spacing:0.15px;">-689.01</div>
<div class="c r" style="top:604px;left:642px;width:69.15px;letter-spacing:0.15px;">-114.16</div>
<div class="c r" style="top:604px;left:713px;width:79.15px;letter-spacing:0.15px;">-803.17</div>
<div class="c" style="top:624px;left:27px;letter-spacing:0.3px;">Johnny Owens</div>
<div class="c r" style="top:624px;left:161px;width:108px;">21864</div>
<div class="c" style="top:624px;left:271px;letter-spacing:1.0px;">JM</div>
<div class="c r" style="top:624px;left:347px;width:73.5px;letter-spacing:0.5px;">27/09/2006</div>
<div class="c" style="top:624px;left:424px;letter-spacing:-0.5px;">ASR011048</div>
<div class="c" style="top:624px;left:504px;letter-spacing:0.5px;">Removal</div>
<div class="c r" style="top:624px;left:564px;width:76.15px;letter-spacing:0.15px;">706.1</div>
<div class="c r" style="top:624px;left:642px;width:69.15px;letter-spacing:0.15px;">117.15</div>
<div class="c r" style="top:624px;left:713px;width:79.15px;letter-spacing:0.15px;">823.25</div>
<div class="c" style="top:644px;left:27px;letter-spacing:0.3px;">Johnny Owens</div>
<div class="c r" style="top:644px;left:161px;width:108px;">21864</div>
<div class="c" style="top:644px;left:271px;letter-spacing:1.0px;">JM</div>
<div class="c r" style="top:644px;left:347px;width:73.5px;letter-spacing:0.5px;">28/09/2006</div>
<div class="c" style="top:644px;left:424px;letter-spacing:-0.5px;">ASR011049</div>
<div class="c" style="top:644px;left:504px;letter-spacing:0.5px;">Removal</div>
<div class="c r" style="top:644px;left:564px;width:76.15px;letter-spacing:0.15px;">-689.01</div>
<div class="c r" style="top:644px;left:642px;width:69.15px;letter-spacing:0.15px;">-114.16</div>
<div class="c r" style="top:644px;left:713px;width:79.15px;letter-spacing:0.15px;">-803.17</div>
<div class="c" style="top:664px;left:27px;letter-spacing:0.3px;">Johnny Owens</div>
<div class="c r" style="top:664px;left:161px;width:108px;">21864</div>
<div class="c" style="top:664px;left:271px;letter-spacing:1.0px;">JM</div>
<div class="c r" style="top:664px;left:347px;width:73.5px;letter-spacing:0.5px;">29/09/2006</div>
<div class="c" style="top:664px;left:424px;letter-spacing:-0.5px;">ASR011050</div>
<div class="c" style="top:664px;left:504px;letter-spacing:0.5px;">Removal</div>
<div class="c r" style="top:664px;left:564px;width:76.15px;letter-spacing:0.15px;">855</div>
<div class="c r" style="top:664px;left:642px;width:69.15px;letter-spacing:0.15px;">149.63</div>
<div class="c r" style="top:664px;left:713px;width:79.15px;letter-spacing:0.15px;">1,004.63</div>
<div class="a" style="left:26px;top:184px;width:1px;height:21px;background:#000"></div>
<div class="a" style="left:26px;top:184px;width:136px;height:1px;background:#000"></div>
<div class="a" style="left:159px;top:184px;width:3px;height:16px;background:#000"></div>
<div class="a" style="left:26px;top:202px;width:131px;height:3px;background:#000"></div>
<div class="a" style="left:157px;top:200px;width:7px;height:7px;background:#fff"></div>
<div class="a" style="left:158px;top:201px;width:5px;height:5px;background:#000"></div>

<div id="vscroll" class="a"></div>
<div class="a" style="left:1010px;top:165px;width:13px;height:7px;background:#f4f4f4;border:1px solid #a0a0a0"><div class="a" style="left:2px;top:2px;width:7px;height:1px;background:#888"></div></div>
<svg class="a" style="left:1008px;top:172px" width="16" height="530" viewBox="0 0 16 530">
 <defs><linearGradient id="ar" x1="0" y1="0" x2="0" y2="1"><stop offset="0" stop-color="#e8e8e8"/><stop offset="1" stop-color="#9a9a9a"/></linearGradient></defs>
 <path d="M3.5 11.5 L8 6.5 L12.5 11.5 Z" fill="url(#ar)"/>
 <path d="M3.5 516 L12.5 516 L8 521 Z" fill="url(#ar)"/>
</svg>
<div id="vthumb" class="a"></div>
<svg class="a" style="left:1008px;top:560px" width="16" height="14" viewBox="0 0 16 14"><path d="M5 4.5 H13 M5 6.5 H13 M5 8.5 H13 M5 10.5 H13" stroke="#7a7a7a" stroke-width="1"/></svg>
<div id="tabbar" class="a"></div>
<div class="a" style="left:0;top:700px;width:63px;height:14px;background:linear-gradient(#dfe3ea,#d2d7df 50%,#c4cad4 52%,#e2e5ea);border-right:1px solid #5a5a5a"></div>
<svg class="a" style="left:0;top:699px" width="300" height="16" viewBox="0 0 300 16">
 <defs>
  <linearGradient id="tw" x1="0" y1="0" x2="0" y2="1"><stop offset="0" stop-color="#ffffff"/><stop offset="0.55" stop-color="#fafbfc"/><stop offset="1" stop-color="#cfd4dc"/></linearGradient>
  <linearGradient id="tg" x1="0" y1="0" x2="0" y2="1"><stop offset="0" stop-color="#e6e9ee"/><stop offset="0.5" stop-color="#d6dae1"/><stop offset="0.55" stop-color="#c5cbd4"/><stop offset="1" stop-color="#d9dde3"/></linearGradient>
 </defs>
 <path d="M6.5 4 V11 M12 4 L8 7.5 L12 11 Z" stroke="#333" stroke-width="1.2" fill="#333"/>
 <path d="M26 4 L22 7.5 L26 11 Z" fill="#333"/>
 <path d="M36 4 L40 7.5 L36 11 Z" fill="#333"/>
 <path d="M50 4 L54 7.5 L50 11 Z M55.5 4 V11" stroke="#333" stroke-width="1.2" fill="#333"/>
 <path d="M64 0 H140 L126 14 H64 Z" fill="url(#tw)"/>
 <path d="M246 14.5 L259.5 1 H291.5 L278 14.5 Z" fill="url(#tg)"/><path d="M246 14.5 L259.5 1 M291.5 1 L278 14.5 M247 14.5 H278" stroke="#f2f2f2" stroke-width="1" fill="none"/>
 <path d="M185 14.5 L199 0.5 H259 L245 14.5 Z" fill="url(#tg)" stroke="#4a4a4a" stroke-width="1"/>
 <path d="M126 14.5 L140 0.5 H199 L185 14.5 Z" fill="url(#tg)" stroke="#4a4a4a" stroke-width="1"/>
 <path d="M0 0.5 H64 M139 0.5 H300" stroke="#4a4a4a" stroke-width="1"/>
 <text x="72" y="12.5" font-family="Liberation Sans" font-weight="bold" font-size="12" fill="#222">Invoices</text>
 <text x="140" y="12.5" font-family="Liberation Sans" font-size="12" fill="#333">Sheet2</text>
 <text x="200" y="12.5" font-family="Liberation Sans" font-size="12" fill="#333">Sheet3</text>
 <path d="M263.5 4.5 H273.5 V11 H268 L266.5 12.5 H264.5 Z" fill="#e8eef8" stroke="#4a6aa8" stroke-width="1"/>
 <path d="M263 1.5 V6.5 M260.5 4 H265.5 M261 2 L265 6 M265 2 L261 6" stroke="#f09010" stroke-width="1"/>
</svg>
<div class="a" style="left:606px;top:700px;width:7px;height:14px;background:#fbfbfb;border:1px solid #a8a8a8"><div class="a" style="left:2px;top:2px;width:1px;height:8px;background:#777"></div></div>
<div class="a" style="left:613px;top:700px;width:411px;height:14px;background:#404040"></div>
<div class="a" style="left:631px;top:701px;width:292px;height:12px;border-radius:2px;background:linear-gradient(#fafafa,#eeeeee 45%,#d8d8dc);border:1px solid #a0a0a0"></div>
<svg class="a" style="left:613px;top:700px" width="395" height="14" viewBox="0 0 395 14">
 <defs><linearGradient id="arh" x1="0" y1="0" x2="1" y2="0"><stop offset="0" stop-color="#9a9a9a"/><stop offset="1" stop-color="#e0e0e0"/></linearGradient>
 <linearGradient id="arh2" x1="0" y1="0" x2="1" y2="0"><stop offset="0" stop-color="#e0e0e0"/><stop offset="1" stop-color="#9a9a9a"/></linearGradient></defs>
 <path d="M6.5 7 L11.5 2.5 V11.5 Z" fill="url(#arh)"/>
 <path d="M160.5 4 V11 M162.5 4 V11 M164.5 4 V11 M166.5 4 V11" stroke="#8a8a8a" stroke-width="1"/>
 <path d="M376 2.5 L381 7 L376 11.5 Z" fill="url(#arh2)"/>
</svg>
<div class="a" style="left:1000px;top:700px;width:8px;height:14px;background:#fbfbfb;border:1px solid #a8a8a8"><div class="a" style="left:2px;top:2px;width:1px;height:8px;background:#777"></div></div>
<div id="status" class="a"></div>
<div class="a" style="left:46px;top:717px;width:1px;height:20px;background:#151515;border-right:1px solid #555"></div>
<div class="a" style="left:6px;top:720px;font-size:10px;font-weight:bold;color:#fff;line-height:14px;letter-spacing:0.5px">Ready</div>
<div class="a" style="left:779px;top:715px;width:245px;height:23px;background:linear-gradient(#666 0,#555 4px,#404040 12px,#333 22px,#444 23px)"></div>
<div class="a" style="left:779px;top:716px;width:1px;height:21px;background:#111"></div>
<svg class="a" style="left:780px;top:715px" width="244" height="23" viewBox="0 0 244 23">
 <defs>
  <linearGradient id="vo" x1="0" y1="0" x2="0" y2="1"><stop offset="0" stop-color="#fde9b4"/><stop offset="0.45" stop-color="#fbd585"/><stop offset="0.55" stop-color="#f4b73c"/><stop offset="1" stop-color="#f8d070"/></linearGradient>
  <linearGradient id="vg" x1="0" y1="0" x2="0" y2="1"><stop offset="0" stop-color="#a8a8a8"/><stop offset="0.5" stop-color="#8c8c8c"/><stop offset="0.55" stop-color="#767676"/><stop offset="1" stop-color="#8a8a8a"/></linearGradient>
  <radialGradient id="zc" cx="50%" cy="40%" r="60%"><stop offset="0" stop-color="#f4f4f4"/><stop offset="0.7" stop-color="#c8c8c8"/><stop offset="1" stop-color="#8a8a8a"/></radialGradient>
 </defs>
 <rect x="6.5" y="2.5" width="55" height="18" rx="2.5" fill="url(#vg)" stroke="#5a5a5a" stroke-width="1"/>
 <path d="M7 3 H24 V20 H7 Z" fill="url(#vo)"/>
 <path d="M24.5 3 V20 M43.5 3 V20" stroke="#666" stroke-width="1"/>
 <g fill="#3a3a3a"><rect x="10" y="6" width="11" height="11"/></g>
 <g fill="#fff"><rect x="11" y="7" width="2.5" height="2"/><rect x="14.5" y="7" width="2.5" height="2"/><rect x="18" y="7" width="2" height="2"/>
 <rect x="11" y="10.5" width="2.5" height="2"/><rect x="14.5" y="10.5" width="2.5" height="2"/><rect x="18" y="10.5" width="2" height="2"/>
 <rect x="11" y="14" width="2.5" height="2"/><rect x="14.5" y="14" width="2.5" height="2"/><rect x="18" y="14" width="2" height="2"/></g>
 <rect x="28.5" y="6.5" width="10" height="10" fill="#d8d8d8" stroke="#3a3a3a" stroke-width="1"/>
 <path d="M31 8.5 H36 M31 10.5 H36 M31 12.5 H36 M31 14.5 H36" stroke="#555" stroke-width="0.8"/>
 <rect x="47.5" y="6.5" width="10" height="10" fill="#3a3a3a" stroke="#3a3a3a" stroke-width="1"/>
 <rect x="49" y="7.5" width="3" height="6" fill="#fff"/><rect x="53" y="7.5" width="3" height="6" fill="#fff"/>
 <text x="69.5" y="14.5" font-family="Liberation Sans" font-weight="bold" font-size="11" fill="#fff">100%</text>
 <circle cx="113" cy="11" r="7.5" fill="url(#zc)" stroke="#303030" stroke-width="0.8"/>
 <rect x="108.5" y="9.5" width="9" height="3" fill="#4a5464"/>
 <path d="M121 10.5 H223" stroke="#111" stroke-width="1"/><path d="M121 11.5 H223" stroke="#e8e8e8" stroke-width="1"/>
 <path d="M167.5 4.5 H175.5 V13 L171.5 16.5 L167.5 13 Z" fill="#f0f0f0" stroke="#303030" stroke-width="0.9"/>
 <path d="M171 7 V12" stroke="#666" stroke-width="1"/>
 <circle cx="231" cy="11" r="7.5" fill="url(#zc)" stroke="#303030" stroke-width="0.8"/>
 <path d="M226 11 H236 M231 6 V16" stroke="#4a5464" stroke-width="2.6"/>
</svg>
</body></html>
